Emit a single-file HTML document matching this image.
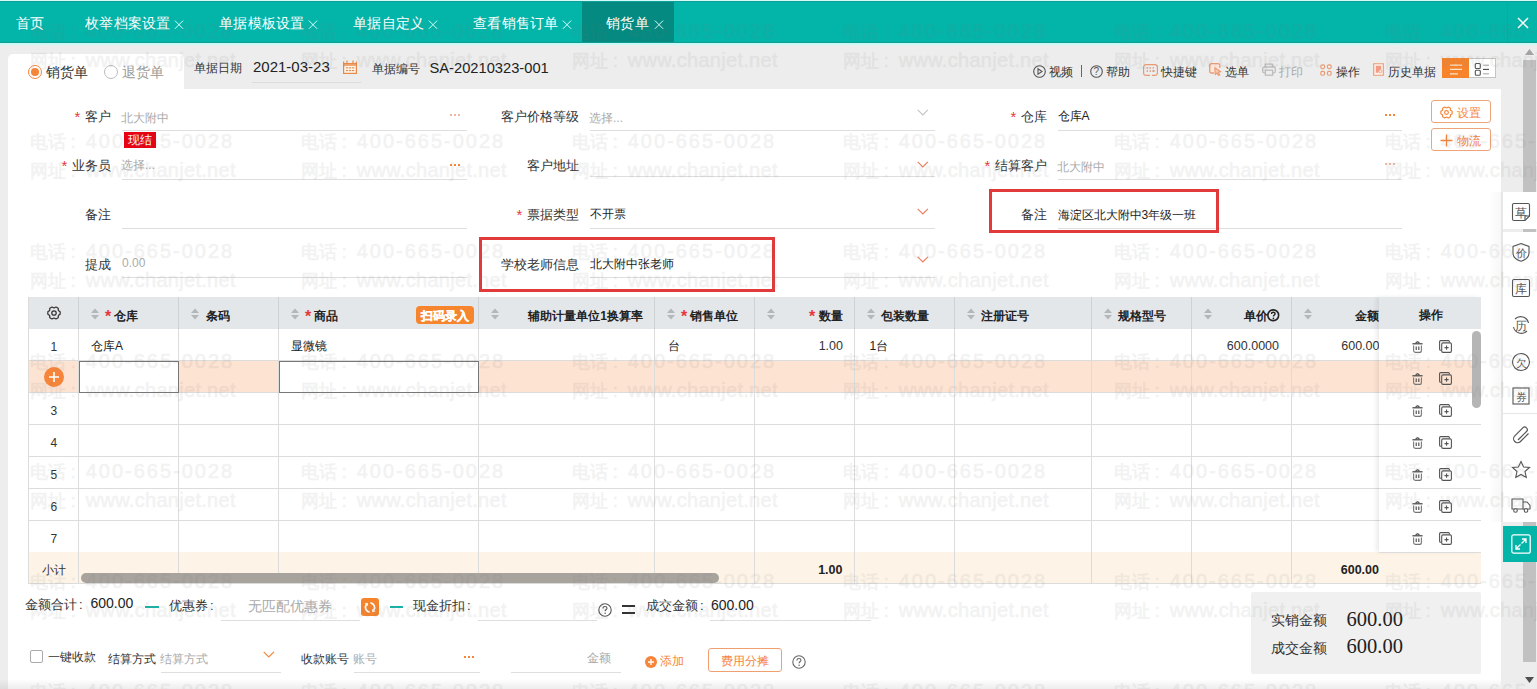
<!DOCTYPE html><html><head><meta charset="utf-8"><style>
html,body{margin:0;padding:0}
body{width:1537px;height:689px;overflow:hidden;position:relative;background:#ededed;font-family:"Liberation Sans",sans-serif}
.t{position:absolute;white-space:nowrap;line-height:1}
.r{position:absolute}
.wm{position:absolute;white-space:nowrap;line-height:1;font-size:20px;-webkit-text-stroke:0.6px #7a7a7a}
.wm .c{font-size:18px}
.wm .d{letter-spacing:2px}
.wm .k{display:inline-block;width:20px;padding-left:5px;box-sizing:border-box;font-size:18px}
.wm .w{letter-spacing:0.3px}
</style></head><body>
<div class="r" style="left:0px;top:0px;width:1537px;height:1px;background:#d4fbf7"></div>
<div class="r" style="left:0px;top:1px;width:1537px;height:1px;background:#0f9f96"></div>
<div class="r" style="left:0px;top:2px;width:1537px;height:39.5px;background:#03b4a9"></div>
<div class="r" style="left:0px;top:41.5px;width:1537px;height:1px;background:#139a92"></div>
<div class="r" style="left:0px;top:42.5px;width:1537px;height:2px;background:#c6faf4"></div>
<div class="r" style="left:582px;top:2px;width:92px;height:40px;background:#048a80"></div>
<div class="r" style="left:1507px;top:1px;width:1px;height:41px;background:#0fa89d"></div>
<div class="t" style="left:16px;top:16px;font-size:14px;color:#fff;font-weight:normal;letter-spacing:0.3px">首页</div>
<div class="t" style="left:85px;top:16px;font-size:14px;color:#fff;font-weight:normal;letter-spacing:0.3px">枚举档案设置</div>
<div class="t" style="left:219px;top:16px;font-size:14px;color:#fff;font-weight:normal;letter-spacing:0.3px">单据模板设置</div>
<div class="t" style="left:353px;top:16px;font-size:14px;color:#fff;font-weight:normal;letter-spacing:0.3px">单据自定义</div>
<div class="t" style="left:473px;top:16px;font-size:14px;color:#fff;font-weight:normal;letter-spacing:0.3px">查看销售订单</div>
<div class="t" style="left:606px;top:16px;font-size:14px;color:#fff;font-weight:normal;letter-spacing:0.3px">销货单</div>
<svg class="r" style="left:174px;top:19.5px;" width="10" height="9" viewBox="0 0 10 9"><path d="M0.9 0.6L9.1 8.8M9.1 0.6L0.9 8.8" stroke="#d8fffb" stroke-width="1"/></svg>
<svg class="r" style="left:308px;top:19.5px;" width="10" height="9" viewBox="0 0 10 9"><path d="M0.9 0.6L9.1 8.8M9.1 0.6L0.9 8.8" stroke="#d8fffb" stroke-width="1"/></svg>
<svg class="r" style="left:428px;top:19.5px;" width="10" height="9" viewBox="0 0 10 9"><path d="M0.9 0.6L9.1 8.8M9.1 0.6L0.9 8.8" stroke="#d8fffb" stroke-width="1"/></svg>
<svg class="r" style="left:562px;top:19.5px;" width="10" height="9" viewBox="0 0 10 9"><path d="M0.9 0.6L9.1 8.8M9.1 0.6L0.9 8.8" stroke="#d8fffb" stroke-width="1"/></svg>
<svg class="r" style="left:654px;top:19.5px;" width="10" height="9" viewBox="0 0 10 9"><path d="M0.9 0.6L9.1 8.8M9.1 0.6L0.9 8.8" stroke="#d8fffb" stroke-width="1"/></svg>
<svg class="r" style="left:1517px;top:17px;" width="12" height="12" viewBox="0 0 12 12"><path d="M1 1L11 11M11 1L1 11" stroke="#fff" stroke-width="1.5"/></svg>
<div class="r" style="left:8px;top:54px;width:176px;height:40px;background:#fff;border-radius:5px 5px 0 0"></div>
<svg class="r" style="left:28px;top:65px;" width="14" height="14" viewBox="0 0 14 14"><circle cx="7" cy="7" r="6.5" fill="#fff" stroke="#f5853a"/><circle cx="7" cy="7" r="4" fill="#f5853a"/></svg>
<div class="t" style="left:46px;top:64.5px;font-size:14px;color:#333;font-weight:normal;">销货单</div>
<svg class="r" style="left:104px;top:65px;" width="14" height="14" viewBox="0 0 14 14"><circle cx="7" cy="7" r="6.5" fill="#fff" stroke="#bbb"/></svg>
<div class="t" style="left:122px;top:64.5px;font-size:14px;color:#999;font-weight:normal;">退货单</div>
<div class="t" style="left:194px;top:62px;font-size:12px;color:#333;font-weight:normal;">单据日期</div>
<div class="t" style="left:253px;top:59px;font-size:15px;color:#222;font-weight:normal;">2021-03-23</div>
<div class="r" style="left:252px;top:82px;width:109px;height:1px;background:#dcdcdc"></div>
<svg class="r" style="left:343px;top:60px;" width="14" height="14" viewBox="0 0 14 14"><rect x="0.6" y="3.6" width="12.8" height="9.8" fill="#fff3e6" stroke="#e58a48" stroke-width="1.2"/><path d="M0.6 5H13.4" stroke="#e58a48" stroke-width="1.4"/><path d="M4 0.6V3.8M10 0.6V3.8M0.6 1.6V4M13.4 1.6V4" stroke="#e58a48" stroke-width="1.2"/><g fill="#d98a55"><rect x="3" y="7.3" width="2.2" height="1.1"/><rect x="6" y="7.3" width="2.2" height="1.1"/><rect x="9" y="7.3" width="2.2" height="1.1"/><rect x="3" y="10" width="2.2" height="1.1"/><rect x="6" y="10" width="2.2" height="1.1"/><rect x="9" y="10" width="2.2" height="1.1"/></g></svg>
<div class="t" style="left:372px;top:62.5px;font-size:12px;color:#333;font-weight:normal;">单据编号</div>
<div class="t" style="left:429.5px;top:60.5px;font-size:14.7px;color:#222;font-weight:normal;">SA-20210323-001</div>
<svg class="r" style="left:1033px;top:65px;" width="13" height="13" viewBox="0 0 13 13"><circle cx="6.5" cy="6.5" r="5.8" fill="none" stroke="#555" stroke-width="1.1"/><path d="M5 3.8L9 6.5L5 9.2Z" fill="none" stroke="#555" stroke-width="1.1"/></svg>
<div class="t" style="left:1049px;top:65.5px;font-size:12px;color:#333;font-weight:normal;">视频</div>
<div class="r" style="left:1081px;top:65px;width:1px;height:12px;background:#666"></div>
<svg class="r" style="left:1090px;top:65px;" width="13" height="13" viewBox="0 0 13 13"><circle cx="6.5" cy="6.5" r="5.8" fill="none" stroke="#555" stroke-width="1.1"/></svg>
<div class="t" style="left:1093.5px;top:66.5px;font-size:10px;color:#555;font-weight:normal;">?</div>
<div class="t" style="left:1106px;top:65.5px;font-size:12px;color:#333;font-weight:normal;">帮助</div>
<svg class="r" style="left:1142.5px;top:63.5px;" width="15" height="12" viewBox="0 0 15 12"><path d="M7 11.4H3A2.4 2.4 0 0 1 0.6 9V3A2.4 2.4 0 0 1 3 0.6H12A2.4 2.4 0 0 1 14.4 3V9A2.4 2.4 0 0 1 12 11.4H9" fill="none" stroke="#ea9a72" stroke-width="1.2"/><g fill="#d99a80"><rect x="3.5" y="3.3" width="1.5" height="1.3"/><rect x="6.5" y="3.3" width="1.5" height="1.3"/><rect x="9.5" y="3.3" width="1.5" height="1.3"/><rect x="3.7" y="6" width="1.1" height="2"/><rect x="6.7" y="6" width="1.1" height="2"/><rect x="9.5" y="6" width="2" height="2"/></g></svg>
<div class="t" style="left:1161px;top:65.5px;font-size:12px;color:#333;font-weight:normal;">快捷键</div>
<svg class="r" style="left:1208.5px;top:63px;" width="13" height="13" viewBox="0 0 13 13"><path d="M5 10H2.5A1.8 1.8 0 0 1 0.7 8.2V2.5A1.8 1.8 0 0 1 2.5 0.7H9A1.8 1.8 0 0 1 10.8 2.5V5" fill="#fde6dc" stroke="#ea9a72" stroke-width="1.3"/><path d="M5.8 4.8L11.8 8.6L9.2 9.3L10.8 11.8L9.6 12.5L8 10L6.3 11.6Z" fill="#f7c5ac" stroke="#ea9a72" stroke-width="1.1" stroke-linejoin="round"/></svg>
<div class="t" style="left:1225px;top:65.5px;font-size:12px;color:#333;font-weight:normal;">选单</div>
<svg class="r" style="left:1261.5px;top:63px;" width="14" height="13" viewBox="0 0 14 13"><g fill="none" stroke="#bdbdbd" stroke-width="1.3"><path d="M3.3 4V1.2H10.7V4"/><path d="M3 9.8H2.2A1.6 1.6 0 0 1 0.7 8.2V5.6A1.6 1.6 0 0 1 2.3 4H11.7A1.6 1.6 0 0 1 13.3 5.6V8.2A1.6 1.6 0 0 1 11.8 9.8H11"/><rect x="3.4" y="7.2" width="7.2" height="5"/></g></svg>
<div class="t" style="left:1279px;top:65.5px;font-size:12px;color:#aaa;font-weight:normal;">打印</div>
<svg class="r" style="left:1319.5px;top:63.5px;" width="12" height="12" viewBox="0 0 12 12"><g fill="none" stroke="#ea9a72" stroke-width="1.15"><rect x="0.8" y="0.8" width="3.8" height="3.8" rx="1.5"/><rect x="7.4" y="0.8" width="3.8" height="3.8" rx="1.5"/><rect x="0.8" y="7.4" width="3.8" height="3.8" rx="1.5"/><rect x="7.4" y="7.4" width="3.8" height="3.8" rx="1.5"/></g></svg>
<div class="t" style="left:1336px;top:65.5px;font-size:12px;color:#333;font-weight:normal;">操作</div>
<svg class="r" style="left:1372.5px;top:62.5px;" width="11" height="13" viewBox="0 0 11 13"><path d="M0.7 0.7H10.3V12.3H0.7Z" fill="#fff3ee" stroke="#ea9a72" stroke-width="1.1"/><path d="M2.8 2.8H8.2V6.5L6.8 6.8L5.2 9.8H2.8Z" fill="#f29c84"/><circle cx="7.3" cy="8.3" r="1.6" fill="#fde3da" stroke="#f29c84" stroke-width="0.8"/></svg>
<div class="t" style="left:1388px;top:65.5px;font-size:12px;color:#333;font-weight:normal;">历史单据</div>
<div class="r" style="left:1442px;top:58px;width:27px;height:20px;background:#f7842c"></div>
<svg class="r" style="left:1442px;top:58px;" width="27" height="20" viewBox="0 0 27 20"><path d="M8 7.2H20M8 11.4H20M8 15.8H16" stroke="#fde3c8" stroke-width="1.3"/></svg>
<div class="r" style="left:1469px;top:58px;width:27px;height:20px;background:#fff;border:1px solid #c4c4c4;border-left:none;box-sizing:border-box"></div>
<svg class="r" style="left:1469px;top:58px;" width="27" height="20" viewBox="0 0 27 20"><g fill="none" stroke="#555" stroke-width="1.1"><rect x="6.3" y="5.5" width="5" height="5" rx="1"/><rect x="6.3" y="12.3" width="5" height="5" rx="1"/></g><path d="M14 7.2H20" stroke="#aaa" stroke-width="1.1"/><path d="M14 11.4H20" stroke="#444" stroke-width="1.1"/><path d="M14 15.8H20" stroke="#aaa" stroke-width="1.1"/></svg>
<div class="r" style="left:8px;top:89px;width:1493px;height:600px;background:#fff"></div>
<div class="t" style="left:74.5px;top:109px;font-size:15px;color:#e4393c;font-weight:normal;">*</div>
<div class="t" style="right:1426px;top:110px;font-size:13px;color:#333;font-weight:normal;">客户</div>
<div class="t" style="left:121px;top:111.5px;font-size:12px;color:#aaa;font-weight:normal;">北大附中</div>
<div class="r" style="left:450px;top:114px;width:2px;height:2px;background:#efbaa5"></div>
<div class="r" style="left:454px;top:114px;width:2px;height:2px;background:#efbaa5"></div>
<div class="r" style="left:458px;top:114px;width:2px;height:2px;background:#efbaa5"></div>
<div class="r" style="left:122px;top:130px;width:345px;height:1px;background:#dedede"></div>
<div class="r" style="left:124px;top:132px;width:32px;height:16px;background:#e60012"></div>
<div class="t" style="left:128px;top:134px;font-size:12px;color:#fff;font-weight:normal;">现结</div>
<div class="t" style="left:61.5px;top:158px;font-size:15px;color:#e4393c;font-weight:normal;">*</div>
<div class="t" style="right:1426px;top:159px;font-size:13px;color:#333;font-weight:normal;">业务员</div>
<div class="t" style="left:121px;top:158.5px;font-size:12px;color:#aaa;font-weight:normal;">选择...</div>
<div class="r" style="left:450px;top:164px;width:2px;height:2px;background:#f5853a"></div>
<div class="r" style="left:454px;top:164px;width:2px;height:2px;background:#f5853a"></div>
<div class="r" style="left:458px;top:164px;width:2px;height:2px;background:#f5853a"></div>
<div class="r" style="left:122px;top:179px;width:345px;height:1px;background:#dedede"></div>
<div class="t" style="right:1426px;top:208px;font-size:13px;color:#333;font-weight:normal;">备注</div>
<div class="r" style="left:122px;top:228px;width:345px;height:1px;background:#dedede"></div>
<div class="t" style="right:1426px;top:258px;font-size:13px;color:#333;font-weight:normal;">提成</div>
<div class="t" style="left:122px;top:257px;font-size:12px;color:#aaa;font-weight:normal;">0.00</div>
<div class="r" style="left:122px;top:277px;width:345px;height:1px;background:#dedede"></div>
<div class="t" style="right:958px;top:110px;font-size:13px;color:#333;font-weight:normal;">客户价格等级</div>
<div class="t" style="left:589px;top:111.5px;font-size:12px;color:#aaa;font-weight:normal;">选择...</div>
<svg class="r" style="left:917px;top:109.3px;" width="12" height="7" viewBox="0 0 12 7"><path d="M0.7 0.8L5.8 6L10.9 0.8" fill="none" stroke="#c4c4c4" stroke-width="1.15"/></svg>
<div class="r" style="left:590px;top:130px;width:345px;height:1px;background:#dedede"></div>
<div class="t" style="right:958px;top:159px;font-size:13px;color:#333;font-weight:normal;">客户地址</div>
<svg class="r" style="left:916.5px;top:160.5px;" width="12" height="7" viewBox="0 0 12 7"><path d="M0.7 0.8L5.8 6L10.9 0.8" fill="none" stroke="#ee7d5e" stroke-width="1.15"/></svg>
<div class="r" style="left:590px;top:176px;width:345px;height:1px;background:#dedede"></div>
<div class="t" style="left:516.5px;top:207px;font-size:15px;color:#e4393c;font-weight:normal;">*</div>
<div class="t" style="right:958.5px;top:208px;font-size:13px;color:#333;font-weight:normal;">票据类型</div>
<div class="t" style="left:589.5px;top:207.5px;font-size:12px;color:#222;font-weight:normal;">不开票</div>
<svg class="r" style="left:916.5px;top:207.5px;" width="12" height="7" viewBox="0 0 12 7"><path d="M0.7 0.8L5.8 6L10.9 0.8" fill="none" stroke="#ee7d5e" stroke-width="1.15"/></svg>
<div class="r" style="left:590px;top:228px;width:345px;height:1px;background:#dedede"></div>
<div class="t" style="right:958.5px;top:258px;font-size:13px;color:#333;font-weight:normal;">学校老师信息</div>
<div class="t" style="left:590px;top:257.5px;font-size:12px;color:#222;font-weight:normal;">北大附中张老师</div>
<svg class="r" style="left:916.5px;top:255.5px;" width="12" height="7" viewBox="0 0 12 7"><path d="M0.7 0.8L5.8 6L10.9 0.8" fill="none" stroke="#ee7d5e" stroke-width="1.15"/></svg>
<div class="r" style="left:590px;top:277px;width:345px;height:1px;background:#dedede"></div>
<div class="r" style="left:479px;top:237px;width:296px;height:55px;border:3px solid #e03a3a;box-sizing:border-box"></div>
<div class="t" style="left:1010.5px;top:109px;font-size:15px;color:#e4393c;font-weight:normal;">*</div>
<div class="t" style="right:490.5px;top:110px;font-size:13px;color:#333;font-weight:normal;">仓库</div>
<div class="t" style="left:1057.5px;top:109.5px;font-size:12px;color:#222;font-weight:normal;">仓库A</div>
<div class="r" style="left:1385px;top:114px;width:2px;height:2px;background:#f5853a"></div>
<div class="r" style="left:1389px;top:114px;width:2px;height:2px;background:#f5853a"></div>
<div class="r" style="left:1393px;top:114px;width:2px;height:2px;background:#f5853a"></div>
<div class="r" style="left:1058px;top:130px;width:344px;height:1px;background:#dedede"></div>
<div class="t" style="left:984.5px;top:158px;font-size:15px;color:#e4393c;font-weight:normal;">*</div>
<div class="t" style="right:490.5px;top:159px;font-size:13px;color:#333;font-weight:normal;">结算客户</div>
<div class="t" style="left:1057px;top:160.5px;font-size:12px;color:#aaa;font-weight:normal;">北大附中</div>
<div class="r" style="left:1385px;top:163px;width:2px;height:2px;background:#efbaa5"></div>
<div class="r" style="left:1389px;top:163px;width:2px;height:2px;background:#efbaa5"></div>
<div class="r" style="left:1393px;top:163px;width:2px;height:2px;background:#efbaa5"></div>
<div class="r" style="left:1058px;top:179px;width:344px;height:1px;background:#dedede"></div>
<div class="t" style="right:490.5px;top:208px;font-size:13px;color:#333;font-weight:normal;">备注</div>
<div class="t" style="left:1057.5px;top:208.5px;font-size:12px;color:#222;font-weight:normal;">海淀区北大附中3年级一班</div>
<div class="r" style="left:1058px;top:228px;width:344px;height:1px;background:#dedede"></div>
<div class="r" style="left:989px;top:189px;width:230px;height:44px;border:3px solid #e03a3a;box-sizing:border-box"></div>
<div class="r" style="left:1431px;top:99.5px;width:60px;height:23px;border:1px solid #eda47a;border-radius:3px;box-sizing:border-box;background:#fff"></div>
<svg class="r" style="left:1440.3px;top:106px;" width="13" height="13" viewBox="0 0 13 13"><g fill="none" stroke="#f5853a" stroke-width="1.1" stroke-linejoin="round"><path d="M10.48 4.20 L12.17 5.29 L12.17 7.71 L10.48 8.80 L10.38 10.81 L8.29 12.02 L6.50 11.10 L4.71 12.02 L2.62 10.81 L2.52 8.80 L0.83 7.71 L0.83 5.29 L2.52 4.20 L2.62 2.19 L4.71 0.98 L6.50 1.90 L8.29 0.98 L10.38 2.19Z"/><circle cx="6.5" cy="6.5" r="1.9"/></g></svg>
<div class="t" style="left:1456.5px;top:106.5px;font-size:12px;color:#f5853a;font-weight:normal;">设置</div>
<div class="r" style="left:1431px;top:127.5px;width:60px;height:23px;border:1px solid #eda47a;border-radius:3px;box-sizing:border-box;background:#fff"></div>
<svg class="r" style="left:1440px;top:134px;" width="13" height="13" viewBox="0 0 13 13"><path d="M6.5 0.5V12.5M0.5 6.5H12.5" stroke="#f5853a" stroke-width="1.3"/></svg>
<div class="t" style="left:1456.5px;top:135px;font-size:12px;color:#f5853a;font-weight:normal;">物流</div>
<div class="r" style="left:28px;top:297px;width:1453px;height:32px;background:#e4e7ea"></div>
<div class="r" style="left:28px;top:360px;width:1453px;height:32px;background:#fde3d2"></div>
<div class="r" style="left:28px;top:552px;width:1453px;height:31px;background:#fdf4e7"></div>
<div class="r" style="left:28px;top:360px;width:1453px;height:1px;background:#dcdcdc"></div>
<div class="r" style="left:28px;top:392px;width:1453px;height:1px;background:#dcdcdc"></div>
<div class="r" style="left:28px;top:424px;width:1453px;height:1px;background:#dcdcdc"></div>
<div class="r" style="left:28px;top:456px;width:1453px;height:1px;background:#dcdcdc"></div>
<div class="r" style="left:28px;top:488px;width:1453px;height:1px;background:#dcdcdc"></div>
<div class="r" style="left:28px;top:520px;width:1453px;height:1px;background:#dcdcdc"></div>
<div class="r" style="left:28px;top:583px;width:1453px;height:1px;background:#dcdcdc"></div>
<div class="r" style="left:28px;top:297px;width:1px;height:286px;background:#dcdcdc"></div>
<div class="r" style="left:78px;top:297px;width:1px;height:286px;background:#dcdcdc"></div>
<div class="r" style="left:78px;top:297px;width:1px;height:32px;background:#cfd2d5"></div>
<div class="r" style="left:178px;top:297px;width:1px;height:286px;background:#dcdcdc"></div>
<div class="r" style="left:178px;top:297px;width:1px;height:32px;background:#cfd2d5"></div>
<div class="r" style="left:278px;top:297px;width:1px;height:286px;background:#dcdcdc"></div>
<div class="r" style="left:278px;top:297px;width:1px;height:32px;background:#cfd2d5"></div>
<div class="r" style="left:478px;top:297px;width:1px;height:286px;background:#dcdcdc"></div>
<div class="r" style="left:478px;top:297px;width:1px;height:32px;background:#cfd2d5"></div>
<div class="r" style="left:654px;top:297px;width:1px;height:286px;background:#dcdcdc"></div>
<div class="r" style="left:654px;top:297px;width:1px;height:32px;background:#cfd2d5"></div>
<div class="r" style="left:754px;top:297px;width:1px;height:286px;background:#dcdcdc"></div>
<div class="r" style="left:754px;top:297px;width:1px;height:32px;background:#cfd2d5"></div>
<div class="r" style="left:854px;top:297px;width:1px;height:286px;background:#dcdcdc"></div>
<div class="r" style="left:854px;top:297px;width:1px;height:32px;background:#cfd2d5"></div>
<div class="r" style="left:954px;top:297px;width:1px;height:286px;background:#dcdcdc"></div>
<div class="r" style="left:954px;top:297px;width:1px;height:32px;background:#cfd2d5"></div>
<div class="r" style="left:1091px;top:297px;width:1px;height:286px;background:#dcdcdc"></div>
<div class="r" style="left:1091px;top:297px;width:1px;height:32px;background:#cfd2d5"></div>
<div class="r" style="left:1191px;top:297px;width:1px;height:286px;background:#dcdcdc"></div>
<div class="r" style="left:1191px;top:297px;width:1px;height:32px;background:#cfd2d5"></div>
<div class="r" style="left:1291px;top:297px;width:1px;height:286px;background:#dcdcdc"></div>
<div class="r" style="left:1291px;top:297px;width:1px;height:32px;background:#cfd2d5"></div>
<div class="r" style="left:79px;top:361px;width:100px;height:32px;background:#fff;border:1px solid #777;box-sizing:border-box"></div>
<div class="r" style="left:279px;top:361px;width:200px;height:32px;background:#fff;border:1px solid #777;box-sizing:border-box"></div>
<svg class="r" style="left:46.5px;top:306.3px;" width="14" height="14" viewBox="0 0 14 14"><g fill="none" stroke="#333" stroke-width="1.25" stroke-linejoin="round"><path d="M11.33 4.50 L13.16 5.69 L13.16 8.31 L11.33 9.50 L11.22 11.68 L8.95 12.99 L7.00 12.00 L5.05 12.99 L2.78 11.68 L2.67 9.50 L0.84 8.31 L0.84 5.69 L2.67 4.50 L2.78 2.32 L5.05 1.01 L7.00 2.00 L8.95 1.01 L11.22 2.32Z"/><circle cx="7" cy="7" r="2.2"/></g></svg>
<svg class="r" style="left:91px;top:308px;" width="8" height="12" viewBox="0 0 8 12"><path d="M4 0.5L8 5H0Z M4 11.5L8 7H0Z" fill="#b4b7ba"/></svg>
<svg class="r" style="left:191px;top:308px;" width="8" height="12" viewBox="0 0 8 12"><path d="M4 0.5L8 5H0Z M4 11.5L8 7H0Z" fill="#b4b7ba"/></svg>
<svg class="r" style="left:291px;top:308px;" width="8" height="12" viewBox="0 0 8 12"><path d="M4 0.5L8 5H0Z M4 11.5L8 7H0Z" fill="#b4b7ba"/></svg>
<svg class="r" style="left:491px;top:308px;" width="8" height="12" viewBox="0 0 8 12"><path d="M4 0.5L8 5H0Z M4 11.5L8 7H0Z" fill="#b4b7ba"/></svg>
<svg class="r" style="left:667px;top:308px;" width="8" height="12" viewBox="0 0 8 12"><path d="M4 0.5L8 5H0Z M4 11.5L8 7H0Z" fill="#b4b7ba"/></svg>
<svg class="r" style="left:767px;top:308px;" width="8" height="12" viewBox="0 0 8 12"><path d="M4 0.5L8 5H0Z M4 11.5L8 7H0Z" fill="#b4b7ba"/></svg>
<svg class="r" style="left:867px;top:308px;" width="8" height="12" viewBox="0 0 8 12"><path d="M4 0.5L8 5H0Z M4 11.5L8 7H0Z" fill="#b4b7ba"/></svg>
<svg class="r" style="left:967px;top:308px;" width="8" height="12" viewBox="0 0 8 12"><path d="M4 0.5L8 5H0Z M4 11.5L8 7H0Z" fill="#b4b7ba"/></svg>
<svg class="r" style="left:1104px;top:308px;" width="8" height="12" viewBox="0 0 8 12"><path d="M4 0.5L8 5H0Z M4 11.5L8 7H0Z" fill="#b4b7ba"/></svg>
<svg class="r" style="left:1204px;top:308px;" width="8" height="12" viewBox="0 0 8 12"><path d="M4 0.5L8 5H0Z M4 11.5L8 7H0Z" fill="#b4b7ba"/></svg>
<svg class="r" style="left:1304px;top:308px;" width="8" height="12" viewBox="0 0 8 12"><path d="M4 0.5L8 5H0Z M4 11.5L8 7H0Z" fill="#b4b7ba"/></svg>
<div class="t" style="left:105px;top:309px;font-size:16px;color:#e4393c;font-weight:bold;">*</div>
<div class="t" style="left:114px;top:310px;font-size:12px;color:#222;font-weight:bold;">仓库</div>
<div class="t" style="left:205.5px;top:310px;font-size:12px;color:#222;font-weight:bold;">条码</div>
<div class="t" style="left:305px;top:309px;font-size:16px;color:#e4393c;font-weight:bold;">*</div>
<div class="t" style="left:314px;top:310px;font-size:12px;color:#222;font-weight:bold;">商品</div>
<div class="r" style="left:416px;top:306px;width:58px;height:18px;background:#f6852e;border-radius:4px"></div>
<div class="t" style="left:421px;top:309.5px;font-size:12px;color:#fff;font-weight:bold;-webkit-text-stroke:0.35px #fff">扫码录入</div>
<div class="t" style="right:894px;top:310px;font-size:12px;color:#222;font-weight:bold;">辅助计量单位1换算率</div>
<div class="t" style="left:681px;top:309px;font-size:16px;color:#e4393c;font-weight:bold;">*</div>
<div class="t" style="left:690px;top:310px;font-size:12px;color:#222;font-weight:bold;">销售单位</div>
<div class="t" style="left:809px;top:309px;font-size:16px;color:#e4393c;font-weight:bold;">*</div>
<div class="t" style="right:694px;top:310px;font-size:12px;color:#222;font-weight:bold;">数量</div>
<div class="t" style="left:881px;top:310px;font-size:12px;color:#222;font-weight:bold;">包装数量</div>
<div class="t" style="left:981px;top:310px;font-size:12px;color:#222;font-weight:bold;">注册证号</div>
<div class="t" style="left:1118px;top:310px;font-size:12px;color:#222;font-weight:bold;">规格型号</div>
<div class="t" style="right:269.5px;top:310px;font-size:12px;color:#222;font-weight:bold;">单价</div>
<svg class="r" style="left:1267px;top:309px;" width="13" height="13" viewBox="0 0 13 13"><circle cx="6.25" cy="6.25" r="5.4" fill="none" stroke="#222" stroke-width="1.6"/><path d="M4.5 4.9C4.5 3.7 5.3 3.2 6.3 3.2C7.3 3.2 8.1 3.8 8.1 4.7C8.1 5.9 6.4 6 6.4 7.5" fill="none" stroke="#222" stroke-width="1.4"/><circle cx="6.4" cy="9.3" r="0.85" fill="#222"/></svg>
<div class="t" style="right:158px;top:310px;font-size:12px;color:#222;font-weight:bold;">金额</div>
<div class="t" style="left:50.5px;top:341px;font-size:12px;color:#333;font-weight:normal;width:6px;text-align:center">1</div>
<div class="t" style="left:50.5px;top:405px;font-size:12px;color:#333;font-weight:normal;width:6px;text-align:center">3</div>
<div class="t" style="left:50.5px;top:437px;font-size:12px;color:#333;font-weight:normal;width:6px;text-align:center">4</div>
<div class="t" style="left:50.5px;top:469px;font-size:12px;color:#333;font-weight:normal;width:6px;text-align:center">5</div>
<div class="t" style="left:50.5px;top:501px;font-size:12px;color:#333;font-weight:normal;width:6px;text-align:center">6</div>
<div class="t" style="left:50.5px;top:533px;font-size:12px;color:#333;font-weight:normal;width:6px;text-align:center">7</div>
<svg class="r" style="left:44px;top:367px;" width="20" height="20" viewBox="0 0 20 20"><circle cx="10" cy="10" r="10" fill="#f5853a"/><path d="M10 5V15M5 10H15" stroke="#fff" stroke-width="1.6"/></svg>
<div class="t" style="left:91px;top:340px;font-size:12px;color:#222;font-weight:normal;">仓库A</div>
<div class="t" style="left:291px;top:340px;font-size:12px;color:#222;font-weight:normal;">显微镜</div>
<div class="t" style="left:668px;top:340px;font-size:12px;color:#222;font-weight:normal;">台</div>
<div class="t" style="right:694px;top:340px;font-size:12.5px;color:#333;font-weight:normal;">1.00</div>
<div class="t" style="left:869.5px;top:340px;font-size:12px;color:#222;font-weight:normal;">1台</div>
<div class="t" style="right:258px;top:340px;font-size:12.5px;color:#333;font-weight:normal;">600.0000</div>
<div class="t" style="right:157.5px;top:340px;font-size:12.5px;color:#333;font-weight:normal;">600.00</div>
<div class="r" style="left:1379px;top:297px;width:102px;height:255px;background:transparent;box-shadow:-3px 0 4px rgba(0,0,0,0.07)"></div>
<div class="r" style="left:1379px;top:297px;width:102px;height:32px;background:#e4e7ea"></div>
<div class="r" style="left:1379px;top:329px;width:102px;height:31px;background:#fff"></div>
<div class="r" style="left:1379px;top:360px;width:102px;height:32px;background:#fde3d2"></div>
<div class="r" style="left:1379px;top:392px;width:102px;height:32px;background:#fff"></div>
<div class="r" style="left:1379px;top:424px;width:102px;height:32px;background:#fff"></div>
<div class="r" style="left:1379px;top:456px;width:102px;height:32px;background:#fff"></div>
<div class="r" style="left:1379px;top:488px;width:102px;height:32px;background:#fff"></div>
<div class="r" style="left:1379px;top:520px;width:102px;height:32px;background:#fff"></div>
<div class="r" style="left:1379px;top:360px;width:102px;height:1px;background:#dcdcdc"></div>
<div class="r" style="left:1379px;top:392px;width:102px;height:1px;background:#dcdcdc"></div>
<div class="r" style="left:1379px;top:424px;width:102px;height:1px;background:#dcdcdc"></div>
<div class="r" style="left:1379px;top:456px;width:102px;height:1px;background:#dcdcdc"></div>
<div class="r" style="left:1379px;top:488px;width:102px;height:1px;background:#dcdcdc"></div>
<div class="r" style="left:1379px;top:520px;width:102px;height:1px;background:#dcdcdc"></div>
<div class="r" style="left:1379px;top:552px;width:102px;height:1px;background:#dcdcdc"></div>
<div class="t" style="left:1418.5px;top:309px;font-size:12px;color:#222;font-weight:bold;">操作</div>
<svg class="r" style="left:1411.5px;top:340px;" width="11" height="13" viewBox="0 0 11 13"><g fill="none" stroke="#444" stroke-width="1.1"><path d="M3.8 3.6A1.7 1.7 0 0 1 7.2 3.6"/><path d="M0.4 3.8H10.6" stroke-width="1.2"/><path d="M1.6 5.4V10.4A2 2 0 0 0 3.6 12.4H7.4A2 2 0 0 0 9.4 10.4V5.4" stroke="#777"/><path d="M4.2 6.6V10M6.8 6.6V10"/></g></svg>
<svg class="r" style="left:1438.5px;top:340px;" width="13" height="13" viewBox="0 0 13 13"><g fill="none" stroke="#555" stroke-width="1.1"><path d="M2.2 10.3H1.6A1 1 0 0 1 0.6 9.3V1.6A1 1 0 0 1 1.6 0.6H9.4A1 1 0 0 1 10.4 1.6V2.3"/><rect x="2.7" y="2.9" width="9.7" height="9.5" rx="1.3"/><path d="M7.55 5.6V9.7M5.5 7.65H9.6"/></g></svg>
<svg class="r" style="left:1411.5px;top:372px;" width="11" height="13" viewBox="0 0 11 13"><g fill="none" stroke="#444" stroke-width="1.1"><path d="M3.8 3.6A1.7 1.7 0 0 1 7.2 3.6"/><path d="M0.4 3.8H10.6" stroke-width="1.2"/><path d="M1.6 5.4V10.4A2 2 0 0 0 3.6 12.4H7.4A2 2 0 0 0 9.4 10.4V5.4" stroke="#777"/><path d="M4.2 6.6V10M6.8 6.6V10"/></g></svg>
<svg class="r" style="left:1438.5px;top:372px;" width="13" height="13" viewBox="0 0 13 13"><g fill="none" stroke="#555" stroke-width="1.1"><path d="M2.2 10.3H1.6A1 1 0 0 1 0.6 9.3V1.6A1 1 0 0 1 1.6 0.6H9.4A1 1 0 0 1 10.4 1.6V2.3"/><rect x="2.7" y="2.9" width="9.7" height="9.5" rx="1.3"/><path d="M7.55 5.6V9.7M5.5 7.65H9.6"/></g></svg>
<svg class="r" style="left:1411.5px;top:404px;" width="11" height="13" viewBox="0 0 11 13"><g fill="none" stroke="#444" stroke-width="1.1"><path d="M3.8 3.6A1.7 1.7 0 0 1 7.2 3.6"/><path d="M0.4 3.8H10.6" stroke-width="1.2"/><path d="M1.6 5.4V10.4A2 2 0 0 0 3.6 12.4H7.4A2 2 0 0 0 9.4 10.4V5.4" stroke="#777"/><path d="M4.2 6.6V10M6.8 6.6V10"/></g></svg>
<svg class="r" style="left:1438.5px;top:404px;" width="13" height="13" viewBox="0 0 13 13"><g fill="none" stroke="#555" stroke-width="1.1"><path d="M2.2 10.3H1.6A1 1 0 0 1 0.6 9.3V1.6A1 1 0 0 1 1.6 0.6H9.4A1 1 0 0 1 10.4 1.6V2.3"/><rect x="2.7" y="2.9" width="9.7" height="9.5" rx="1.3"/><path d="M7.55 5.6V9.7M5.5 7.65H9.6"/></g></svg>
<svg class="r" style="left:1411.5px;top:436px;" width="11" height="13" viewBox="0 0 11 13"><g fill="none" stroke="#444" stroke-width="1.1"><path d="M3.8 3.6A1.7 1.7 0 0 1 7.2 3.6"/><path d="M0.4 3.8H10.6" stroke-width="1.2"/><path d="M1.6 5.4V10.4A2 2 0 0 0 3.6 12.4H7.4A2 2 0 0 0 9.4 10.4V5.4" stroke="#777"/><path d="M4.2 6.6V10M6.8 6.6V10"/></g></svg>
<svg class="r" style="left:1438.5px;top:436px;" width="13" height="13" viewBox="0 0 13 13"><g fill="none" stroke="#555" stroke-width="1.1"><path d="M2.2 10.3H1.6A1 1 0 0 1 0.6 9.3V1.6A1 1 0 0 1 1.6 0.6H9.4A1 1 0 0 1 10.4 1.6V2.3"/><rect x="2.7" y="2.9" width="9.7" height="9.5" rx="1.3"/><path d="M7.55 5.6V9.7M5.5 7.65H9.6"/></g></svg>
<svg class="r" style="left:1411.5px;top:468px;" width="11" height="13" viewBox="0 0 11 13"><g fill="none" stroke="#444" stroke-width="1.1"><path d="M3.8 3.6A1.7 1.7 0 0 1 7.2 3.6"/><path d="M0.4 3.8H10.6" stroke-width="1.2"/><path d="M1.6 5.4V10.4A2 2 0 0 0 3.6 12.4H7.4A2 2 0 0 0 9.4 10.4V5.4" stroke="#777"/><path d="M4.2 6.6V10M6.8 6.6V10"/></g></svg>
<svg class="r" style="left:1438.5px;top:468px;" width="13" height="13" viewBox="0 0 13 13"><g fill="none" stroke="#555" stroke-width="1.1"><path d="M2.2 10.3H1.6A1 1 0 0 1 0.6 9.3V1.6A1 1 0 0 1 1.6 0.6H9.4A1 1 0 0 1 10.4 1.6V2.3"/><rect x="2.7" y="2.9" width="9.7" height="9.5" rx="1.3"/><path d="M7.55 5.6V9.7M5.5 7.65H9.6"/></g></svg>
<svg class="r" style="left:1411.5px;top:500px;" width="11" height="13" viewBox="0 0 11 13"><g fill="none" stroke="#444" stroke-width="1.1"><path d="M3.8 3.6A1.7 1.7 0 0 1 7.2 3.6"/><path d="M0.4 3.8H10.6" stroke-width="1.2"/><path d="M1.6 5.4V10.4A2 2 0 0 0 3.6 12.4H7.4A2 2 0 0 0 9.4 10.4V5.4" stroke="#777"/><path d="M4.2 6.6V10M6.8 6.6V10"/></g></svg>
<svg class="r" style="left:1438.5px;top:500px;" width="13" height="13" viewBox="0 0 13 13"><g fill="none" stroke="#555" stroke-width="1.1"><path d="M2.2 10.3H1.6A1 1 0 0 1 0.6 9.3V1.6A1 1 0 0 1 1.6 0.6H9.4A1 1 0 0 1 10.4 1.6V2.3"/><rect x="2.7" y="2.9" width="9.7" height="9.5" rx="1.3"/><path d="M7.55 5.6V9.7M5.5 7.65H9.6"/></g></svg>
<svg class="r" style="left:1411.5px;top:532px;" width="11" height="13" viewBox="0 0 11 13"><g fill="none" stroke="#444" stroke-width="1.1"><path d="M3.8 3.6A1.7 1.7 0 0 1 7.2 3.6"/><path d="M0.4 3.8H10.6" stroke-width="1.2"/><path d="M1.6 5.4V10.4A2 2 0 0 0 3.6 12.4H7.4A2 2 0 0 0 9.4 10.4V5.4" stroke="#777"/><path d="M4.2 6.6V10M6.8 6.6V10"/></g></svg>
<svg class="r" style="left:1438.5px;top:532px;" width="13" height="13" viewBox="0 0 13 13"><g fill="none" stroke="#555" stroke-width="1.1"><path d="M2.2 10.3H1.6A1 1 0 0 1 0.6 9.3V1.6A1 1 0 0 1 1.6 0.6H9.4A1 1 0 0 1 10.4 1.6V2.3"/><rect x="2.7" y="2.9" width="9.7" height="9.5" rx="1.3"/><path d="M7.55 5.6V9.7M5.5 7.65H9.6"/></g></svg>
<div class="r" style="left:1472px;top:331px;width:9px;height:77px;background:#b5b5b5;border-radius:4.5px"></div>
<div class="t" style="left:42px;top:564px;font-size:12px;color:#333;font-weight:normal;">小计</div>
<div class="t" style="right:694.5px;top:563.5px;font-size:12.5px;color:#222;font-weight:bold;">1.00</div>
<div class="t" style="right:158px;top:563.5px;font-size:12.5px;color:#222;font-weight:bold;">600.00</div>
<div class="r" style="left:81px;top:573px;width:638px;height:10px;background:#a8a39d;border-radius:5px"></div>
<div class="t" style="left:24.5px;top:598px;font-size:13px;color:#333;font-weight:normal;">金额合计<span style="display:inline-block;margin-left:2.5px">:</span></div>
<div class="t" style="left:90.5px;top:596px;font-size:14px;color:#222;font-weight:normal;">600.00</div>
<div class="r" style="left:145px;top:606px;width:14px;height:2px;background:#17b3a9"></div>
<div class="t" style="left:168.5px;top:598.5px;font-size:13px;color:#333;font-weight:normal;">优惠券<span style="display:inline-block;margin-left:2.5px">:</span></div>
<div class="t" style="left:247.5px;top:599px;font-size:14px;color:#aaa;font-weight:normal;">无匹配优惠券</div>
<div class="r" style="left:221px;top:620px;width:139px;height:1px;background:#dedede"></div>
<div class="r" style="left:361px;top:598px;width:18px;height:18px;background:#f6842c;border-radius:3px"></div>
<svg class="r" style="left:363px;top:600px;" width="14" height="14" viewBox="0 0 14 14"><g fill="none" stroke="#fff" stroke-width="1.7"><path d="M6.60 12.08A4.6 4.6 0 0 1 3.23 4.86"/><path d="M7.40 2.92A4.6 4.6 0 0 1 10.77 10.14"/></g><path d="M4.72 2.73L1.43 3.60L5.03 6.12Z M9.28 12.27L12.57 11.40L8.97 8.88Z" fill="#fff"/></svg>
<div class="r" style="left:390px;top:606px;width:13px;height:2px;background:#17b3a9"></div>
<div class="t" style="left:412.5px;top:598.5px;font-size:13px;color:#333;font-weight:normal;">现金折扣<span style="display:inline-block;margin-left:2.5px">:</span></div>
<div class="r" style="left:478px;top:620px;width:119px;height:1px;background:#dedede"></div>
<svg class="r" style="left:598px;top:603px;" width="14" height="14" viewBox="0 0 14 14"><circle cx="7" cy="7" r="6.2" fill="none" stroke="#555" stroke-width="1.1"/><path d="M5 5.4C5 4.1 5.9 3.5 7 3.5C8.1 3.5 9 4.2 9 5.2C9 6.5 7.1 6.6 7.1 8.3" fill="none" stroke="#555" stroke-width="1.1"/><circle cx="7.1" cy="10.2" r="0.75" fill="#555"/></svg>
<div class="r" style="left:622px;top:605px;width:13px;height:2px;background:#333"></div>
<div class="r" style="left:622px;top:612px;width:13px;height:2px;background:#333"></div>
<div class="t" style="left:645.5px;top:598.5px;font-size:13px;color:#333;font-weight:normal;">成交金额<span style="display:inline-block;margin-left:2.5px">:</span></div>
<div class="t" style="left:711px;top:597.5px;font-size:14px;color:#222;font-weight:normal;">600.00</div>
<div class="r" style="left:710px;top:620px;width:161px;height:1px;background:#dedede"></div>
<div class="r" style="left:30px;top:650px;width:13px;height:13px;border:1px solid #aaa;border-radius:2px;box-sizing:border-box;background:#fff"></div>
<div class="t" style="left:47.5px;top:651px;font-size:12px;color:#333;font-weight:normal;">一键收款</div>
<div class="t" style="left:107.5px;top:653px;font-size:12px;color:#333;font-weight:normal;">结算方式</div>
<div class="t" style="left:160px;top:653px;font-size:12px;color:#aaa;font-weight:normal;">结算方式</div>
<svg class="r" style="left:263px;top:651px;" width="12" height="7" viewBox="0 0 12 7"><path d="M0.7 0.8L5.8 6L10.9 0.8" fill="none" stroke="#f5853a" stroke-width="1.15"/></svg>
<div class="r" style="left:161px;top:672px;width:120px;height:1px;background:#dedede"></div>
<div class="t" style="left:300.5px;top:653px;font-size:12px;color:#333;font-weight:normal;">收款账号</div>
<div class="t" style="left:353px;top:653px;font-size:12px;color:#aaa;font-weight:normal;">账号</div>
<div class="r" style="left:464px;top:656px;width:2px;height:2px;background:#f5853a"></div>
<div class="r" style="left:468px;top:656px;width:2px;height:2px;background:#f5853a"></div>
<div class="r" style="left:472px;top:656px;width:2px;height:2px;background:#f5853a"></div>
<div class="r" style="left:354px;top:672px;width:126px;height:1px;background:#dedede"></div>
<div class="t" style="left:586.5px;top:652px;font-size:12px;color:#aaa;font-weight:normal;">金额</div>
<div class="r" style="left:511px;top:672px;width:110px;height:1px;background:#dedede"></div>
<svg class="r" style="left:645px;top:656px;" width="12" height="12" viewBox="0 0 12 12"><circle cx="6" cy="6" r="6" fill="#f5853a"/><path d="M6 3V9M3 6H9" stroke="#fff" stroke-width="1.3"/></svg>
<div class="t" style="left:660px;top:655px;font-size:12px;color:#f5853a;font-weight:normal;">添加</div>
<div class="r" style="left:708px;top:648px;width:74px;height:24px;border:1px solid #f0a070;border-radius:3px;box-sizing:border-box"></div>
<div class="t" style="left:720.5px;top:655px;font-size:12px;color:#f5853a;font-weight:normal;">费用分摊</div>
<svg class="r" style="left:792px;top:655px;" width="14" height="14" viewBox="0 0 14 14"><circle cx="7" cy="7" r="6.2" fill="none" stroke="#666" stroke-width="1.1"/><path d="M5 5.4C5 4.1 5.9 3.5 7 3.5C8.1 3.5 9 4.2 9 5.2C9 6.5 7.1 6.6 7.1 8.3" fill="none" stroke="#666" stroke-width="1.1"/><circle cx="7.1" cy="10.2" r="0.75" fill="#666"/></svg>
<div class="r" style="left:1251px;top:592px;width:230px;height:82px;background:#f0f0f0;border-radius:2px"></div>
<div class="t" style="left:1271px;top:613px;font-size:14px;color:#333;font-weight:normal;">实销金额</div>
<div class="t" style="left:1346.5px;top:609px;font-size:20.5px;color:#222;font-weight:normal;font-family:Liberation Serif,serif">600.00</div>
<div class="t" style="left:1271px;top:640.5px;font-size:14px;color:#333;font-weight:normal;">成交金额</div>
<div class="t" style="left:1346.5px;top:636px;font-size:20.5px;color:#222;font-weight:normal;font-family:Liberation Serif,serif">600.00</div>
<div class="r" style="left:0px;top:679px;width:1501px;height:10px;background:linear-gradient(to bottom,rgba(0,0,0,0),rgba(0,0,0,0.07))"></div>
<div class="r" style="left:1523px;top:60px;width:13px;height:602px;background:#c1c1c1"></div>
<svg class="r" style="left:1525px;top:49px;" width="9" height="6" viewBox="0 0 9 6"><path d="M4.5 0L9 6H0Z" fill="#a3a3a3"/></svg>
<svg class="r" style="left:1525px;top:677px;" width="9" height="6" viewBox="0 0 9 6"><path d="M0 0H9L4.5 6Z" fill="#505050"/></svg>
<div class="r" style="left:1488px;top:192px;width:15px;height:330px;background:linear-gradient(to right,rgba(0,0,0,0),rgba(0,0,0,0.035))"></div>
<div class="r" style="left:1503px;top:192px;width:34px;height:37px;background:#fff"></div>
<div class="r" style="left:1503px;top:232px;width:34px;height:290px;background:#fff"></div>
<div class="r" style="left:1503px;top:413px;width:34px;height:1px;background:#e6e6e6"></div>
<div class="r" style="left:1503px;top:526px;width:34px;height:36px;background:#03b4a9"></div>
<svg class="r" style="left:1511px;top:534px;" width="20" height="20" viewBox="0 0 20 20"><g fill="none" stroke="#fff" stroke-width="1.3"><rect x="0.8" y="0.8" width="18.4" height="18.4" rx="2"/><path d="M11 5H15V9M15 5L10.5 9.5M9 15H5V11M5 15L9.5 10.5"/></g></svg>
<svg class="r" style="left:1511px;top:202px;" width="20" height="20" viewBox="0 0 20 20"><g fill="none" stroke="#555" stroke-width="1.1"><path d="M3 1.5H17A1.5 1.5 0 0 1 18.5 3V14L14 18.5H3A1.5 1.5 0 0 1 1.5 17V3A1.5 1.5 0 0 1 3 1.5Z"/><path d="M18.5 14H14V18.5"/></g><text x="10" y="14.5" font-size="12" text-anchor="middle" fill="#555">草</text></svg>
<svg class="r" style="left:1511px;top:242px;" width="20" height="20" viewBox="0 0 20 20"><path d="M10 1.5L18 4.5V11C18 15 14 18 10 19.2C6 18 2 15 2 11V4.5Z" fill="none" stroke="#555" stroke-width="1.1"/><text x="10" y="14.5" font-size="11" text-anchor="middle" fill="#555">价</text></svg>
<svg class="r" style="left:1511px;top:278px;" width="20" height="20" viewBox="0 0 20 20"><rect x="1.5" y="1.5" width="17" height="17" rx="1.5" fill="none" stroke="#555" stroke-width="1.1"/><text x="10" y="14.5" font-size="12" text-anchor="middle" fill="#555">库</text></svg>
<svg class="r" style="left:1511px;top:315px;" width="20" height="20" viewBox="0 0 20 20"><g fill="none" stroke="#555" stroke-width="1.1"><path d="M17.5 8A8 8 0 0 0 4 4"/><path d="M2.5 12A8 8 0 0 0 16 16"/></g><text x="10" y="14.5" font-size="12" text-anchor="middle" fill="#555">历</text></svg>
<svg class="r" style="left:1511px;top:352px;" width="20" height="20" viewBox="0 0 20 20"><circle cx="10" cy="10" r="8.5" fill="none" stroke="#555" stroke-width="1.1"/><text x="10" y="14.5" font-size="11" text-anchor="middle" fill="#555">欠</text></svg>
<svg class="r" style="left:1511px;top:386px;" width="20" height="20" viewBox="0 0 20 20"><rect x="2" y="2" width="16" height="16" fill="none" stroke="#555" stroke-width="1.1"/><text x="10" y="14.5" font-size="11" text-anchor="middle" fill="#555">券</text></svg>
<svg class="r" style="left:1511px;top:424px;" width="20" height="20" viewBox="0 0 20 20"><path d="M7 16L15.5 7.5A2.6 2.6 0 0 0 11.8 3.8L3.8 11.8A4 4 0 0 0 9.5 17.5L17.5 9.5" fill="none" stroke="#555" stroke-width="1.2" transform="rotate(0)"/></svg>
<svg class="r" style="left:1511px;top:460px;" width="20" height="20" viewBox="0 0 20 20"><path d="M10 1.5L12.6 7L18.5 7.5L14 11.5L15.3 17.5L10 14.5L4.7 17.5L6 11.5L1.5 7.5L7.4 7Z" fill="none" stroke="#555" stroke-width="1.1"/></svg>
<svg class="r" style="left:1511px;top:495px;" width="20" height="20" viewBox="0 0 20 20"><g fill="none" stroke="#555" stroke-width="1.1"><path d="M1 4H12V14H1Z"/><path d="M12 7H16L19 10.5V14H12"/><circle cx="4.5" cy="15.5" r="1.8" fill="#fff"/><circle cx="15" cy="15.5" r="1.8" fill="#fff"/></g></svg>
<div style="position:absolute;left:0;top:0;width:1537px;height:689px;pointer-events:none;opacity:0.095;color:#7a7a7a"><div class="wm" style="left:29.7px;top:21.3px"><span class="c">电话</span><span class="k">:</span><span class="d">400-665-0028</span></div><div class="wm" style="left:29.7px;top:49.8px"><span class="c">网址</span><span class="k">:</span><span class="w">www.chanjet.net</span></div><div class="wm" style="left:300.7px;top:21.3px"><span class="c">电话</span><span class="k">:</span><span class="d">400-665-0028</span></div><div class="wm" style="left:300.7px;top:49.8px"><span class="c">网址</span><span class="k">:</span><span class="w">www.chanjet.net</span></div><div class="wm" style="left:571.7px;top:21.3px"><span class="c">电话</span><span class="k">:</span><span class="d">400-665-0028</span></div><div class="wm" style="left:571.7px;top:49.8px"><span class="c">网址</span><span class="k">:</span><span class="w">www.chanjet.net</span></div><div class="wm" style="left:842.7px;top:21.3px"><span class="c">电话</span><span class="k">:</span><span class="d">400-665-0028</span></div><div class="wm" style="left:842.7px;top:49.8px"><span class="c">网址</span><span class="k">:</span><span class="w">www.chanjet.net</span></div><div class="wm" style="left:1113.7px;top:21.3px"><span class="c">电话</span><span class="k">:</span><span class="d">400-665-0028</span></div><div class="wm" style="left:1113.7px;top:49.8px"><span class="c">网址</span><span class="k">:</span><span class="w">www.chanjet.net</span></div><div class="wm" style="left:1384.7px;top:21.3px"><span class="c">电话</span><span class="k">:</span><span class="d">400-665-0028</span></div><div class="wm" style="left:1384.7px;top:49.8px"><span class="c">网址</span><span class="k">:</span><span class="w">www.chanjet.net</span></div><div class="wm" style="left:29.7px;top:131.3px"><span class="c">电话</span><span class="k">:</span><span class="d">400-665-0028</span></div><div class="wm" style="left:29.7px;top:159.8px"><span class="c">网址</span><span class="k">:</span><span class="w">www.chanjet.net</span></div><div class="wm" style="left:300.7px;top:131.3px"><span class="c">电话</span><span class="k">:</span><span class="d">400-665-0028</span></div><div class="wm" style="left:300.7px;top:159.8px"><span class="c">网址</span><span class="k">:</span><span class="w">www.chanjet.net</span></div><div class="wm" style="left:571.7px;top:131.3px"><span class="c">电话</span><span class="k">:</span><span class="d">400-665-0028</span></div><div class="wm" style="left:571.7px;top:159.8px"><span class="c">网址</span><span class="k">:</span><span class="w">www.chanjet.net</span></div><div class="wm" style="left:842.7px;top:131.3px"><span class="c">电话</span><span class="k">:</span><span class="d">400-665-0028</span></div><div class="wm" style="left:842.7px;top:159.8px"><span class="c">网址</span><span class="k">:</span><span class="w">www.chanjet.net</span></div><div class="wm" style="left:1113.7px;top:131.3px"><span class="c">电话</span><span class="k">:</span><span class="d">400-665-0028</span></div><div class="wm" style="left:1113.7px;top:159.8px"><span class="c">网址</span><span class="k">:</span><span class="w">www.chanjet.net</span></div><div class="wm" style="left:1384.7px;top:131.3px"><span class="c">电话</span><span class="k">:</span><span class="d">400-665-0028</span></div><div class="wm" style="left:1384.7px;top:159.8px"><span class="c">网址</span><span class="k">:</span><span class="w">www.chanjet.net</span></div><div class="wm" style="left:29.7px;top:241.3px"><span class="c">电话</span><span class="k">:</span><span class="d">400-665-0028</span></div><div class="wm" style="left:29.7px;top:269.8px"><span class="c">网址</span><span class="k">:</span><span class="w">www.chanjet.net</span></div><div class="wm" style="left:300.7px;top:241.3px"><span class="c">电话</span><span class="k">:</span><span class="d">400-665-0028</span></div><div class="wm" style="left:300.7px;top:269.8px"><span class="c">网址</span><span class="k">:</span><span class="w">www.chanjet.net</span></div><div class="wm" style="left:571.7px;top:241.3px"><span class="c">电话</span><span class="k">:</span><span class="d">400-665-0028</span></div><div class="wm" style="left:571.7px;top:269.8px"><span class="c">网址</span><span class="k">:</span><span class="w">www.chanjet.net</span></div><div class="wm" style="left:842.7px;top:241.3px"><span class="c">电话</span><span class="k">:</span><span class="d">400-665-0028</span></div><div class="wm" style="left:842.7px;top:269.8px"><span class="c">网址</span><span class="k">:</span><span class="w">www.chanjet.net</span></div><div class="wm" style="left:1113.7px;top:241.3px"><span class="c">电话</span><span class="k">:</span><span class="d">400-665-0028</span></div><div class="wm" style="left:1113.7px;top:269.8px"><span class="c">网址</span><span class="k">:</span><span class="w">www.chanjet.net</span></div><div class="wm" style="left:1384.7px;top:241.3px"><span class="c">电话</span><span class="k">:</span><span class="d">400-665-0028</span></div><div class="wm" style="left:1384.7px;top:269.8px"><span class="c">网址</span><span class="k">:</span><span class="w">www.chanjet.net</span></div><div class="wm" style="left:29.7px;top:351.3px"><span class="c">电话</span><span class="k">:</span><span class="d">400-665-0028</span></div><div class="wm" style="left:29.7px;top:379.8px"><span class="c">网址</span><span class="k">:</span><span class="w">www.chanjet.net</span></div><div class="wm" style="left:300.7px;top:351.3px"><span class="c">电话</span><span class="k">:</span><span class="d">400-665-0028</span></div><div class="wm" style="left:300.7px;top:379.8px"><span class="c">网址</span><span class="k">:</span><span class="w">www.chanjet.net</span></div><div class="wm" style="left:571.7px;top:351.3px"><span class="c">电话</span><span class="k">:</span><span class="d">400-665-0028</span></div><div class="wm" style="left:571.7px;top:379.8px"><span class="c">网址</span><span class="k">:</span><span class="w">www.chanjet.net</span></div><div class="wm" style="left:842.7px;top:351.3px"><span class="c">电话</span><span class="k">:</span><span class="d">400-665-0028</span></div><div class="wm" style="left:842.7px;top:379.8px"><span class="c">网址</span><span class="k">:</span><span class="w">www.chanjet.net</span></div><div class="wm" style="left:1113.7px;top:351.3px"><span class="c">电话</span><span class="k">:</span><span class="d">400-665-0028</span></div><div class="wm" style="left:1113.7px;top:379.8px"><span class="c">网址</span><span class="k">:</span><span class="w">www.chanjet.net</span></div><div class="wm" style="left:1384.7px;top:351.3px"><span class="c">电话</span><span class="k">:</span><span class="d">400-665-0028</span></div><div class="wm" style="left:1384.7px;top:379.8px"><span class="c">网址</span><span class="k">:</span><span class="w">www.chanjet.net</span></div><div class="wm" style="left:29.7px;top:461.3px"><span class="c">电话</span><span class="k">:</span><span class="d">400-665-0028</span></div><div class="wm" style="left:29.7px;top:489.8px"><span class="c">网址</span><span class="k">:</span><span class="w">www.chanjet.net</span></div><div class="wm" style="left:300.7px;top:461.3px"><span class="c">电话</span><span class="k">:</span><span class="d">400-665-0028</span></div><div class="wm" style="left:300.7px;top:489.8px"><span class="c">网址</span><span class="k">:</span><span class="w">www.chanjet.net</span></div><div class="wm" style="left:571.7px;top:461.3px"><span class="c">电话</span><span class="k">:</span><span class="d">400-665-0028</span></div><div class="wm" style="left:571.7px;top:489.8px"><span class="c">网址</span><span class="k">:</span><span class="w">www.chanjet.net</span></div><div class="wm" style="left:842.7px;top:461.3px"><span class="c">电话</span><span class="k">:</span><span class="d">400-665-0028</span></div><div class="wm" style="left:842.7px;top:489.8px"><span class="c">网址</span><span class="k">:</span><span class="w">www.chanjet.net</span></div><div class="wm" style="left:1113.7px;top:461.3px"><span class="c">电话</span><span class="k">:</span><span class="d">400-665-0028</span></div><div class="wm" style="left:1113.7px;top:489.8px"><span class="c">网址</span><span class="k">:</span><span class="w">www.chanjet.net</span></div><div class="wm" style="left:1384.7px;top:461.3px"><span class="c">电话</span><span class="k">:</span><span class="d">400-665-0028</span></div><div class="wm" style="left:1384.7px;top:489.8px"><span class="c">网址</span><span class="k">:</span><span class="w">www.chanjet.net</span></div><div class="wm" style="left:29.7px;top:571.3px"><span class="c">电话</span><span class="k">:</span><span class="d">400-665-0028</span></div><div class="wm" style="left:29.7px;top:599.8px"><span class="c">网址</span><span class="k">:</span><span class="w">www.chanjet.net</span></div><div class="wm" style="left:300.7px;top:571.3px"><span class="c">电话</span><span class="k">:</span><span class="d">400-665-0028</span></div><div class="wm" style="left:300.7px;top:599.8px"><span class="c">网址</span><span class="k">:</span><span class="w">www.chanjet.net</span></div><div class="wm" style="left:571.7px;top:571.3px"><span class="c">电话</span><span class="k">:</span><span class="d">400-665-0028</span></div><div class="wm" style="left:571.7px;top:599.8px"><span class="c">网址</span><span class="k">:</span><span class="w">www.chanjet.net</span></div><div class="wm" style="left:842.7px;top:571.3px"><span class="c">电话</span><span class="k">:</span><span class="d">400-665-0028</span></div><div class="wm" style="left:842.7px;top:599.8px"><span class="c">网址</span><span class="k">:</span><span class="w">www.chanjet.net</span></div><div class="wm" style="left:1113.7px;top:571.3px"><span class="c">电话</span><span class="k">:</span><span class="d">400-665-0028</span></div><div class="wm" style="left:1113.7px;top:599.8px"><span class="c">网址</span><span class="k">:</span><span class="w">www.chanjet.net</span></div><div class="wm" style="left:1384.7px;top:571.3px"><span class="c">电话</span><span class="k">:</span><span class="d">400-665-0028</span></div><div class="wm" style="left:1384.7px;top:599.8px"><span class="c">网址</span><span class="k">:</span><span class="w">www.chanjet.net</span></div><div class="wm" style="left:29.7px;top:681.3px"><span class="c">电话</span><span class="k">:</span><span class="d">400-665-0028</span></div><div class="wm" style="left:29.7px;top:709.8px"><span class="c">网址</span><span class="k">:</span><span class="w">www.chanjet.net</span></div><div class="wm" style="left:300.7px;top:681.3px"><span class="c">电话</span><span class="k">:</span><span class="d">400-665-0028</span></div><div class="wm" style="left:300.7px;top:709.8px"><span class="c">网址</span><span class="k">:</span><span class="w">www.chanjet.net</span></div><div class="wm" style="left:571.7px;top:681.3px"><span class="c">电话</span><span class="k">:</span><span class="d">400-665-0028</span></div><div class="wm" style="left:571.7px;top:709.8px"><span class="c">网址</span><span class="k">:</span><span class="w">www.chanjet.net</span></div><div class="wm" style="left:842.7px;top:681.3px"><span class="c">电话</span><span class="k">:</span><span class="d">400-665-0028</span></div><div class="wm" style="left:842.7px;top:709.8px"><span class="c">网址</span><span class="k">:</span><span class="w">www.chanjet.net</span></div><div class="wm" style="left:1113.7px;top:681.3px"><span class="c">电话</span><span class="k">:</span><span class="d">400-665-0028</span></div><div class="wm" style="left:1113.7px;top:709.8px"><span class="c">网址</span><span class="k">:</span><span class="w">www.chanjet.net</span></div><div class="wm" style="left:1384.7px;top:681.3px"><span class="c">电话</span><span class="k">:</span><span class="d">400-665-0028</span></div><div class="wm" style="left:1384.7px;top:709.8px"><span class="c">网址</span><span class="k">:</span><span class="w">www.chanjet.net</span></div></div>
</body></html>
